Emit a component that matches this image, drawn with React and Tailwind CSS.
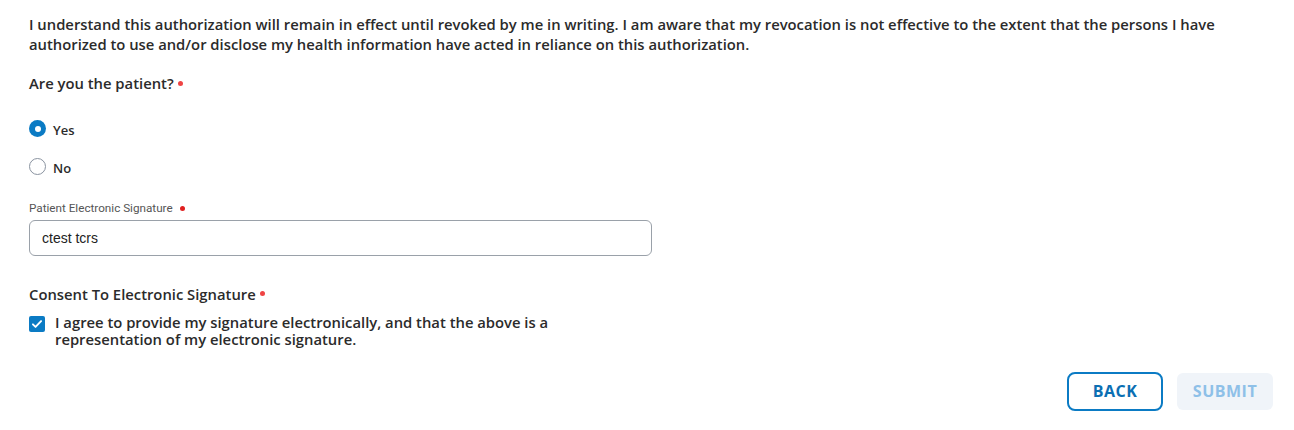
import React, { useState } from "react";

const Dot = () => <span className="ml-1 inline-block h-[5px] w-[5px] rounded-full bg-[#ef4444] align-middle" />;

export default function App() {
  const [patient, setPatient] = useState("yes");
  const [agree, setAgree] = useState(true);
  const [sig, setSig] = useState("ctest tcrs");

  return (
    <div className="w-[1294px] h-[430px] bg-white px-[29px] pt-[14px] text-[#2b2b2b]" style={{ fontFamily: "'Open Sans', 'Noto Sans', sans-serif" }}>
      <p className="text-[14.8px] leading-[20px] font-semibold w-[1210px]">
        I understand this authorization will remain in effect until revoked by me in writing. I am aware that my revocation is not effective to the extent that the persons I have authorized to use and/or disclose my health information have acted in reliance on this authorization.
      </p>

      <div className="mt-[19px] text-[14.8px] leading-[20px] font-semibold flex items-center">
        Are you the patient?<Dot />
      </div>

      <div className="mt-[24px] flex flex-col gap-[14px]">
        {[
          ["yes", "Yes"],
          ["no", "No"],
        ].map(([v, l]) => (
          <label key={v} className="flex items-center gap-[7px] cursor-pointer" onClick={() => setPatient(v)}>
            {patient === v ? (
              <span className="h-[17px] w-[17px] rounded-full bg-[#0b7bc4] flex items-center justify-center">
                <span className="h-[6px] w-[6px] rounded-full bg-white" />
              </span>
            ) : (
              <span className="h-[17px] w-[17px] rounded-full border border-[#8a93a0] bg-white" />
            )}
            <span className="text-[13px] font-semibold mt-[4px]">{l}</span>
          </label>
        ))}
      </div>

      <div className="mt-[22px] text-[11.7px] text-[#555] flex items-center" style={{ fontFamily: "Roboto, sans-serif" }}>
        Patient Electronic Signature
        <span className="ml-[7px] inline-block h-[5px] w-[5px] rounded-full bg-[#e02020]" />
      </div>
      <input
        value={sig}
        onChange={(e) => setSig(e.target.value)}
        className="mt-[2px] w-[623px] h-[36px] rounded-[6px] border border-[#9aa1a9] px-[12px] text-[14px] text-[#222] outline-none"
        style={{ fontFamily: "'Liberation Sans', Arial, sans-serif" }}
      />

      <div className="mt-[28px] text-[14.8px] leading-[20px] font-semibold flex items-center">
        Consent To Electronic Signature<Dot />
      </div>

      <label className="mt-[10px] flex items-start gap-[10px] cursor-pointer" onClick={() => setAgree(!agree)}>
        <span className={`mt-[2px] h-[16px] w-[16px] shrink-0 rounded-[2px] flex items-center justify-center ${agree ? "bg-[#0b7bc4]" : "border border-[#8a93a0]"}`}>
          {agree && (
            <svg viewBox="0 0 24 24" className="h-[14px] w-[14px]" fill="none" stroke="white" strokeWidth="3.2" strokeLinecap="round" strokeLinejoin="round">
              <path d="M5 12.5l4.5 4.5L19 7" />
            </svg>
          )}
        </span>
        <span className="text-[14.8px] leading-[17px] font-semibold w-[530px]">
          I agree to provide my signature electronically, and that the above is a representation of my electronic signature.
        </span>
      </label>

      <div className="mt-[24px] flex justify-end items-center gap-[14px] mr-[-8px]">
        <button className="h-[39px] w-[96px] rounded-[8px] border-2 border-[#0b7bc4] text-[#0b6fb3] text-[16px] font-bold tracking-[0.5px]">
          BACK
        </button>
        <button disabled className="h-[37px] w-[96px] rounded-[6px] bg-[#f0f4f9] text-[#8ec0e8] text-[16px] font-bold tracking-[0.5px]">
          SUBMIT
        </button>
      </div>
    </div>
  );
}
